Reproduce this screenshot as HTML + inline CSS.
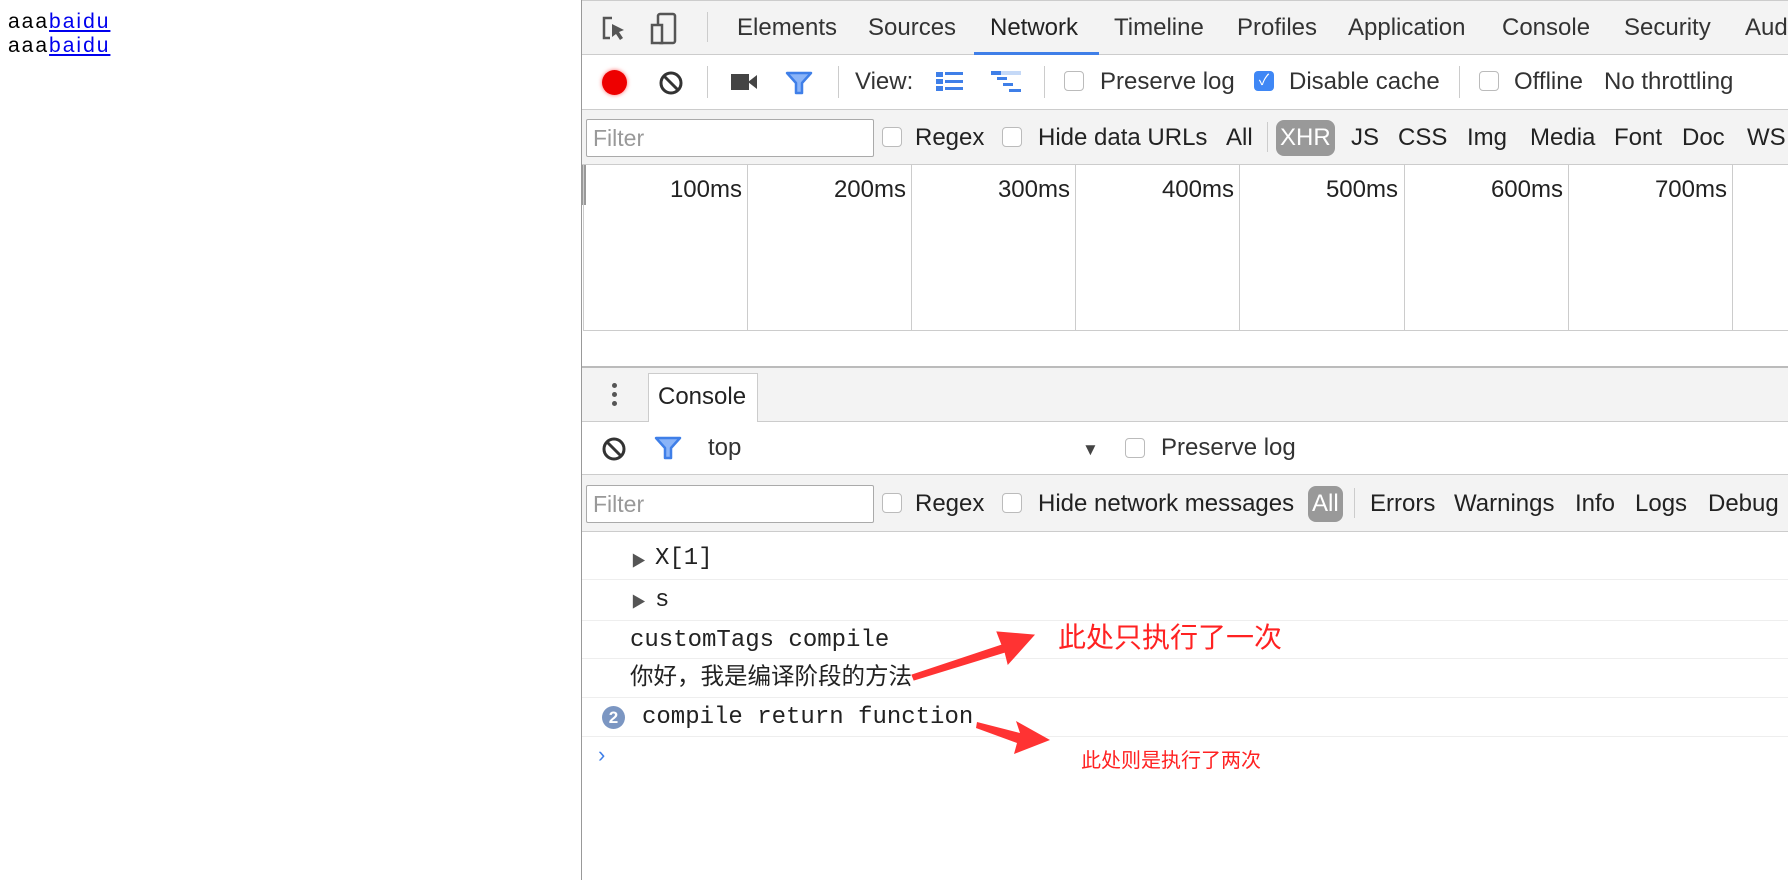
<!DOCTYPE html>
<html><head><meta charset="utf-8"><style>
*{margin:0;padding:0;box-sizing:border-box}
body{width:1788px;height:880px;overflow:hidden;background:#fff;position:relative;font-family:"Liberation Sans","Noto Sans CJK SC",sans-serif;color:#222}
.a{position:absolute;white-space:nowrap}
.t{font-size:24px;line-height:26px}
.m{font-family:"Liberation Mono","Noto Sans CJK SC",monospace;font-size:24px;line-height:26px;color:#222}
.cb{position:absolute;width:20px;height:20px;border:1px solid #bbb;border-radius:4px;background:#fff}
.hl{position:absolute;height:1px;background:#ccc}
.vl{position:absolute;width:1px;background:#ccc}
.filter{position:absolute;border:1px solid #aaa;border-radius:2px;background:#fff;color:#999;font-size:23px;padding:4px 6px;line-height:28px}
</style></head><body>
<div class="a" style="left:8px;top:10px;font-size:21px;letter-spacing:2px;line-height:24px;color:#000">aaa<span style="color:#00e;text-decoration:underline">baidu</span><br>aaa<span style="color:#00e;text-decoration:underline">baidu</span></div>

<div style="position:absolute;left:581px;top:0;width:1207px;height:880px;border-left:1px solid #999;background:#fff"></div>
<!-- tab bar -->
<div style="position:absolute;left:582px;top:0;width:1206px;height:55px;background:#f3f3f3;border-bottom:1px solid #ccc;border-top:1px solid #ccc"></div>
<svg class="a" style="left:600px;top:14px" width="30" height="30" viewBox="0 0 30 30"><path d="M12 4H4v20h6" fill="none" stroke="#555" stroke-width="2.5"/><path d="M12 10l12 6-5 2 4 6-3 2-4-6-4 3z" fill="#555"/></svg>
<svg class="a" style="left:650px;top:12px" width="28" height="34" viewBox="0 0 28 34"><rect x="8" y="2" width="17" height="29" rx="2" fill="none" stroke="#555" stroke-width="2.5"/><rect x="2" y="13" width="10" height="18" fill="#f3f3f3" stroke="#555" stroke-width="2.5"/></svg>
<div class="vl" style="left:707px;top:12px;height:30px"></div>
<div class="a t" style="left:737px;top:15px;color:#333">Elements</div>
<div class="a t" style="left:868px;top:15px;color:#333">Sources</div>
<div class="a t" style="left:990px;top:15px;color:#222">Network</div>
<div style="position:absolute;left:974px;top:52px;width:125px;height:3px;background:#3f7fe8"></div>
<div class="a t" style="left:1114px;top:15px;color:#333">Timeline</div>
<div class="a t" style="left:1237px;top:15px;color:#333">Profiles</div>
<div class="a t" style="left:1348px;top:15px;color:#333">Application</div>
<div class="a t" style="left:1502px;top:15px;color:#333">Console</div>
<div class="a t" style="left:1624px;top:15px;color:#333">Security</div>
<div class="a t" style="left:1745px;top:15px;color:#333">Audits</div>

<!-- toolbar -->
<div class="hl" style="left:582px;top:109px;width:1206px"></div>
<div class="a" style="left:602px;top:70px;width:25px;height:25px;border-radius:50%;background:#e00;box-shadow:0 0 4px #f66"></div>
<svg class="a" style="left:658px;top:70px" width="26" height="26" viewBox="0 0 26 26"><circle cx="13" cy="13" r="10" fill="none" stroke="#333" stroke-width="3"/><path d="M6 6l14 14" stroke="#333" stroke-width="3"/></svg>
<div class="vl" style="left:707px;top:66px;height:32px"></div>
<svg class="a" style="left:731px;top:72px" width="26" height="20"><rect x="0" y="2" width="18" height="16" fill="#444"/><path d="M17 10l9-7v14z" fill="#444"/></svg>
<svg class="a" style="left:785px;top:71px" width="28" height="24" viewBox="0 0 28 24"><path d="M2 2h24l-9 10v10h-6V12z" fill="#8ab4f8" stroke="#3f7fe8" stroke-width="2.5" stroke-linejoin="round"/></svg>
<div class="vl" style="left:838px;top:66px;height:32px"></div>
<div class="a t" style="left:855px;top:69px;color:#333">View:</div>
<svg class="a" style="left:936px;top:71px" width="30" height="22"><rect x="0" y="1" width="7" height="5" fill="#3f7fe8"/><rect x="9" y="1" width="18" height="3" fill="#3f7fe8"/><rect x="0" y="8" width="7" height="5" fill="#3f7fe8"/><rect x="9" y="9" width="18" height="3" fill="#3f7fe8"/><rect x="0" y="15" width="7" height="5" fill="#3f7fe8"/><rect x="9" y="16" width="18" height="3" fill="#3f7fe8"/></svg>
<svg class="a" style="left:991px;top:71px" width="32" height="22"><rect x="0" y="0" width="30" height="4" fill="#c5d9f7"/><rect x="0" y="0" width="10" height="4" fill="#3f7fe8"/><rect x="6" y="6" width="10" height="3" fill="#3f7fe8"/><rect x="12" y="12" width="10" height="3" fill="#3f7fe8"/><rect x="18" y="18" width="12" height="3" fill="#3f7fe8"/></svg>
<div class="vl" style="left:1044px;top:66px;height:32px"></div>
<div class="cb" style="left:1064px;top:71px"></div>
<div class="a t" style="left:1100px;top:69px;color:#333">Preserve log</div>
<div class="a" style="left:1254px;top:71px;width:20px;height:20px;border-radius:4px;background:#3f87f5;color:#fff;font-size:15px;line-height:20px;text-align:center">✓</div>
<div class="a t" style="left:1289px;top:69px;color:#333">Disable cache</div>
<div class="vl" style="left:1459px;top:66px;height:32px"></div>
<div class="cb" style="left:1479px;top:71px"></div>
<div class="a t" style="left:1514px;top:69px;color:#333">Offline</div>
<div class="a t" style="left:1604px;top:69px;color:#333">No throttling</div>

<!-- filter row -->
<div style="position:absolute;left:582px;top:110px;width:1206px;height:55px;background:#f3f3f3;border-bottom:1px solid #ccc"></div>
<div class="filter" style="left:586px;top:119px;width:288px;height:38px">Filter</div>
<div class="cb" style="left:882px;top:127px"></div>
<div class="a t" style="left:915px;top:125px">Regex</div>
<div class="cb" style="left:1002px;top:127px"></div>
<div class="a t" style="left:1038px;top:125px">Hide data URLs</div>
<div class="a t" style="left:1226px;top:125px">All</div>
<div class="vl" style="left:1267px;top:122px;height:30px"></div>
<div class="a t" style="left:1276px;top:120px;height:36px;padding:5px 4px;border-radius:8px;background:#999;color:#fff;line-height:26px">XHR</div>
<div class="a t" style="left:1351px;top:125px">JS</div>
<div class="a t" style="left:1398px;top:125px">CSS</div>
<div class="a t" style="left:1467px;top:125px">Img</div>
<div class="a t" style="left:1530px;top:125px">Media</div>
<div class="a t" style="left:1614px;top:125px">Font</div>
<div class="a t" style="left:1682px;top:125px">Doc</div>
<div class="a t" style="left:1747px;top:125px">WS</div>

<!-- timeline -->
<div style="position:absolute;left:582px;top:165px;width:4px;height:40px;background:#999"></div>
<div style="position:absolute;left:583px;top:330px;width:1205px;height:1px;background:#ccc"></div>
<div class="vl" style="left:583px;top:165px;height:166px"></div>
<div class="vl" style="left:747px;top:165px;height:166px"></div>
<div class="vl" style="left:911px;top:165px;height:166px"></div>
<div class="vl" style="left:1075px;top:165px;height:166px"></div>
<div class="vl" style="left:1239px;top:165px;height:166px"></div>
<div class="vl" style="left:1404px;top:165px;height:166px"></div>
<div class="vl" style="left:1568px;top:165px;height:166px"></div>
<div class="vl" style="left:1732px;top:165px;height:166px"></div>
<div class="a t" style="left:642px;top:177px;width:100px;text-align:right">100ms</div>
<div class="a t" style="left:806px;top:177px;width:100px;text-align:right">200ms</div>
<div class="a t" style="left:970px;top:177px;width:100px;text-align:right">300ms</div>
<div class="a t" style="left:1134px;top:177px;width:100px;text-align:right">400ms</div>
<div class="a t" style="left:1298px;top:177px;width:100px;text-align:right">500ms</div>
<div class="a t" style="left:1463px;top:177px;width:100px;text-align:right">600ms</div>
<div class="a t" style="left:1627px;top:177px;width:100px;text-align:right">700ms</div>

<!-- console drawer -->
<div style="position:absolute;left:582px;top:366px;width:1206px;height:56px;background:#f3f3f3;border-top:2px solid #bbb;border-bottom:1px solid #ccc"></div>
<div class="a" style="left:612px;top:383px;width:5px;height:5px;border-radius:50%;background:#555;box-shadow:0 9px 0 #555,0 18px 0 #555"></div>
<div class="a" style="left:648px;top:373px;width:110px;height:49px;background:#fff;border:1px solid #ccc;border-bottom:none"></div>
<div class="a t" style="left:658px;top:384px">Console</div>

<div class="hl" style="left:582px;top:474px;width:1206px"></div>
<svg class="a" style="left:601px;top:436px" width="26" height="26" viewBox="0 0 26 26"><circle cx="13" cy="13" r="10" fill="none" stroke="#333" stroke-width="3"/><path d="M6 6l14 14" stroke="#333" stroke-width="3"/></svg>
<svg class="a" style="left:654px;top:436px" width="28" height="24" viewBox="0 0 28 24"><path d="M2 2h24l-9 10v10h-6V12z" fill="#8ab4f8" stroke="#3f7fe8" stroke-width="2.5" stroke-linejoin="round"/></svg>
<div class="a t" style="left:708px;top:435px;color:#333">top</div>
<div class="a" style="left:1082px;top:440px;font-size:17px;color:#444">▼</div>
<div class="cb" style="left:1125px;top:438px"></div>
<div class="a t" style="left:1161px;top:435px;color:#333">Preserve log</div>

<div style="position:absolute;left:582px;top:475px;width:1206px;height:57px;background:#f3f3f3;border-bottom:1px solid #ccc"></div>
<div class="filter" style="left:586px;top:485px;width:288px;height:38px">Filter</div>
<div class="cb" style="left:882px;top:493px"></div>
<div class="a t" style="left:915px;top:491px">Regex</div>
<div class="cb" style="left:1002px;top:493px"></div>
<div class="a t" style="left:1038px;top:491px">Hide network messages</div>
<div class="a t" style="left:1308px;top:486px;height:36px;padding:5px 4px;border-radius:8px;background:#999;color:#fff;line-height:26px">All</div>
<div class="vl" style="left:1354px;top:488px;height:30px"></div>
<div class="a t" style="left:1370px;top:491px">Errors</div>
<div class="a t" style="left:1454px;top:491px">Warnings</div>
<div class="a t" style="left:1575px;top:491px">Info</div>
<div class="a t" style="left:1635px;top:491px">Logs</div>
<div class="a t" style="left:1708px;top:491px">Debug</div>

<!-- log -->
<div class="hl" style="left:582px;top:579px;width:1206px;background:#eee"></div>
<div class="hl" style="left:582px;top:620px;width:1206px;background:#eee"></div>
<div class="hl" style="left:582px;top:658px;width:1206px;background:#eee"></div>
<div class="hl" style="left:582px;top:697px;width:1206px;background:#eee"></div>
<div class="hl" style="left:582px;top:736px;width:1206px;background:#eee"></div>
<div class="a" style="left:631px;top:550px;font-size:15px;color:#555">▶</div>
<div class="a m" style="left:655px;top:546px">X[1]</div>
<div class="a" style="left:631px;top:591px;font-size:15px;color:#555">▶</div>
<div class="a m" style="left:655px;top:588px">s</div>
<div class="a m" style="left:630px;top:628px">customTags compile</div>
<div class="a m" style="left:630px;top:666px;font-size:23.5px">你好，我是编译阶段的方法</div>
<div class="a" style="left:602px;top:706px;width:23px;height:23px;border-radius:50%;background:#7b96c2;color:#fff;font-size:17px;line-height:23px;text-align:center;font-weight:bold">2</div>
<div class="a m" style="left:642px;top:705px">compile return function</div>
<div class="a" style="left:598px;top:742px;font-size:22px;color:#3f7fe8">›</div>

<!-- annotations -->
<svg class="a" style="left:0;top:0" width="1788" height="880">
<path d="M912 675 L1002 645 L997 632 L1034 635 L1008 664 L1005 652 L914 680 Z" fill="#f33" stroke="#f33" stroke-width="1"/>
<path d="M977 722 L1020 733 L1016 721 L1050 740 L1014 754 L1017 743 L976 728 Z" fill="#f33"/>
</svg>
<div class="a" style="left:1058px;top:616px;font-size:28px;color:#f22;font-family:'Noto Sans CJK SC',sans-serif">此处只执行了一次</div>
<div class="a" style="left:1081px;top:744px;font-size:20px;color:#f22;font-family:'Noto Sans CJK SC',sans-serif">此处则是执行了两次</div>
</body></html>
